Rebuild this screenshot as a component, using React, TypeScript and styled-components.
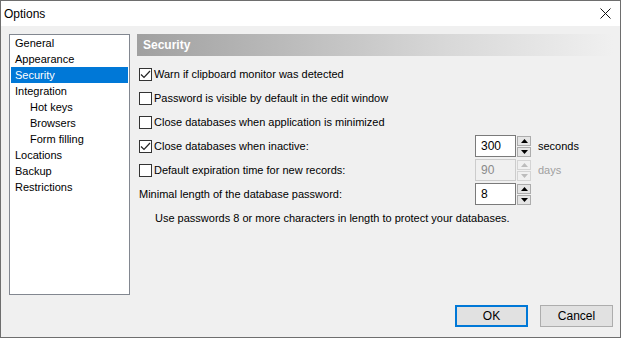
import React from 'react'
import styled, { createGlobalStyle } from 'styled-components'

const Global = createGlobalStyle`
  html, body { margin: 0; padding: 0; background: #f0f0f0; }
  * { box-sizing: border-box; }
`

const Window = styled.div`
  width: 621px;
  height: 338px;
  border: 1px solid #6e6e6e;
  display: flex;
  flex-direction: column;
  font-family: "Liberation Sans", Arial, sans-serif;
  font-size: 11px;
  color: #000;
  background: #f0f0f0;
`

const TitleBar = styled.div`
  height: 25px;
  background: #fff;
  display: flex;
  align-items: center;
  justify-content: space-between;
  padding: 0 9px 0 3px;
  font-size: 12px;
`

const Client = styled.div`
  flex: 1;
  display: flex;
  flex-direction: column;
  padding: 8px 7px 10px 8px;
`

const Main = styled.div`
  display: flex;
  gap: 7px;
  height: 261px;
`

const NavList = styled.div`
  width: 121px;
  background: #fff;
  border: 1px solid #828790;
  padding: 0 1px;
`

const NavItem = styled.div<{ $indent?: boolean; $active?: boolean }>`
  height: 16px;
  line-height: 17px;
  padding-left: ${({ $indent }) => ($indent ? '19px' : '4px')};
  background: ${({ $active }) => ($active ? '#0078d7' : 'transparent')};
  color: ${({ $active }) => ($active ? '#fff' : '#000')};
  white-space: nowrap;
`

const Panel = styled.div`
  flex: 1;
  display: flex;
  flex-direction: column;
`

const Header = styled.div`
  height: 22px;
  display: flex;
  align-items: center;
  padding-left: 6px;
  font-weight: bold;
  font-size: 12px;
  color: #fff;
  background: linear-gradient(to right, #a0a0a0 0%, #d8d8d8 65%, #f0f0f0 100%);
`

const Rows = styled.div`
  margin-top: 6px;
  padding-left: 2px;
  display: flex;
  flex-direction: column;
`

const Row = styled.div`
  height: 24px;
  display: flex;
  align-items: center;
`

const Label = styled.div<{ $wide?: boolean }>`
  display: flex;
  align-items: center;
  width: ${({ $wide }) => ($wide ? '336px' : 'auto')};
  white-space: nowrap;
`

const Box = styled.span`
  width: 13px;
  height: 13px;
  border: 1px solid #333;
  background: #fff;
  margin-right: 2px;
  display: inline-flex;
  align-items: center;
  justify-content: center;
`

const Hint = styled(Row)`
  padding-left: 16px;
`

const SpinWrap = styled.div`
  display: flex;
  align-items: center;
  gap: 1px;
`

const SpinInput = styled.div<{ $disabled?: boolean }>`
  width: 41px;
  height: 22px;
  border: 1px solid ${({ $disabled }) => ($disabled ? '#cccccc' : '#7a7a7a')};
  background: ${({ $disabled }) => ($disabled ? '#f0f0f0' : '#fff')};
  color: ${({ $disabled }) => ($disabled ? '#8a8a8a' : '#000')};
  display: flex;
  align-items: center;
  padding-left: 5px;
  font-size: 12px;
`

const SpinButtons = styled.div`
  display: flex;
  flex-direction: column;
  gap: 1px;
`

const SpinBtn = styled.div<{ $disabled?: boolean }>`
  width: 14px;
  height: 10px;
  border: 1px solid ${({ $disabled }) => ($disabled ? '#d4d4d4' : '#acacac')};
  background: ${({ $disabled }) => ($disabled ? '#f0f0f0' : '#e5e5e5')};
  display: flex;
  align-items: center;
  justify-content: center;
`

const Unit = styled.span<{ $disabled?: boolean }>`
  margin-left: 7px;
  color: ${({ $disabled }) => ($disabled ? '#a0a0a0' : '#000')};
`

const Footer = styled.div`
  margin-top: auto;
  display: flex;
  justify-content: flex-end;
  gap: 12px;
`

const Button = styled.button<{ $primary?: boolean }>`
  width: 73px;
  height: 22px;
  font-family: inherit;
  font-size: 12px;
  color: #000;
  background: #e1e1e1;
  border: ${({ $primary }) => ($primary ? '2px solid #0078d7' : '1px solid #adadad')};
  padding: 0;
`

const Check = ({ on }: { on?: boolean }) => (
  <Box>
    {on && (
      <svg width="11" height="11" viewBox="0 0 11 11">
        <path d="M1 5.5 L4 8.5 L10 2" fill="none" stroke="#222" strokeWidth="1.2" />
      </svg>
    )}
  </Box>
)

const Arrow = ({ up, disabled }: { up?: boolean; disabled?: boolean }) => (
  <svg width="7" height="4" viewBox="0 0 7 4">
    <path d={up ? 'M0 4 L3.5 0 L7 4 Z' : 'M0 0 L7 0 L3.5 4 Z'} fill={disabled ? '#bcbcbc' : '#000'} />
  </svg>
)

const Spinner = ({ value, disabled }: { value: string; disabled?: boolean }) => (
  <SpinWrap>
    <SpinInput $disabled={disabled}>{value}</SpinInput>
    <SpinButtons>
      <SpinBtn $disabled={disabled}><Arrow up disabled={disabled} /></SpinBtn>
      <SpinBtn $disabled={disabled}><Arrow disabled={disabled} /></SpinBtn>
    </SpinButtons>
  </SpinWrap>
)

const nav = [
  { t: 'General' },
  { t: 'Appearance' },
  { t: 'Security', active: true },
  { t: 'Integration' },
  { t: 'Hot keys', indent: true },
  { t: 'Browsers', indent: true },
  { t: 'Form filling', indent: true },
  { t: 'Locations' },
  { t: 'Backup' },
  { t: 'Restrictions' },
]

export default function App() {
  return (
    <>
      <Global />
      <Window>
        <TitleBar>
          <span>Options</span>
          <svg width="11" height="11" viewBox="0 0 11 11">
            <path d="M0.5 0.5 L10.5 10.5 M10.5 0.5 L0.5 10.5" stroke="#111" strokeWidth="1" />
          </svg>
        </TitleBar>
        <Client>
          <Main>
            <NavList>
              {nav.map(n => (
                <NavItem key={n.t} $indent={n.indent} $active={n.active}>{n.t}</NavItem>
              ))}
            </NavList>
            <Panel>
              <Header>Security</Header>
              <Rows>
                <Row><Label><Check on />Warn if clipboard monitor was detected</Label></Row>
                <Row><Label><Check />Password is visible by default in the edit window</Label></Row>
                <Row><Label><Check />Close databases when application is minimized</Label></Row>
                <Row>
                  <Label $wide><Check on />Close databases when inactive:</Label>
                  <Spinner value="300" />
                  <Unit>seconds</Unit>
                </Row>
                <Row>
                  <Label $wide><Check />Default expiration time for new records:</Label>
                  <Spinner value="90" disabled />
                  <Unit $disabled>days</Unit>
                </Row>
                <Row>
                  <Label $wide>Minimal length of the database password:</Label>
                  <Spinner value="8" />
                </Row>
                <Hint>Use passwords 8 or more characters in length to protect your databases.</Hint>
              </Rows>
            </Panel>
          </Main>
          <Footer>
            <Button $primary>OK</Button>
            <Button>Cancel</Button>
          </Footer>
        </Client>
      </Window>
    </>
  )
}
